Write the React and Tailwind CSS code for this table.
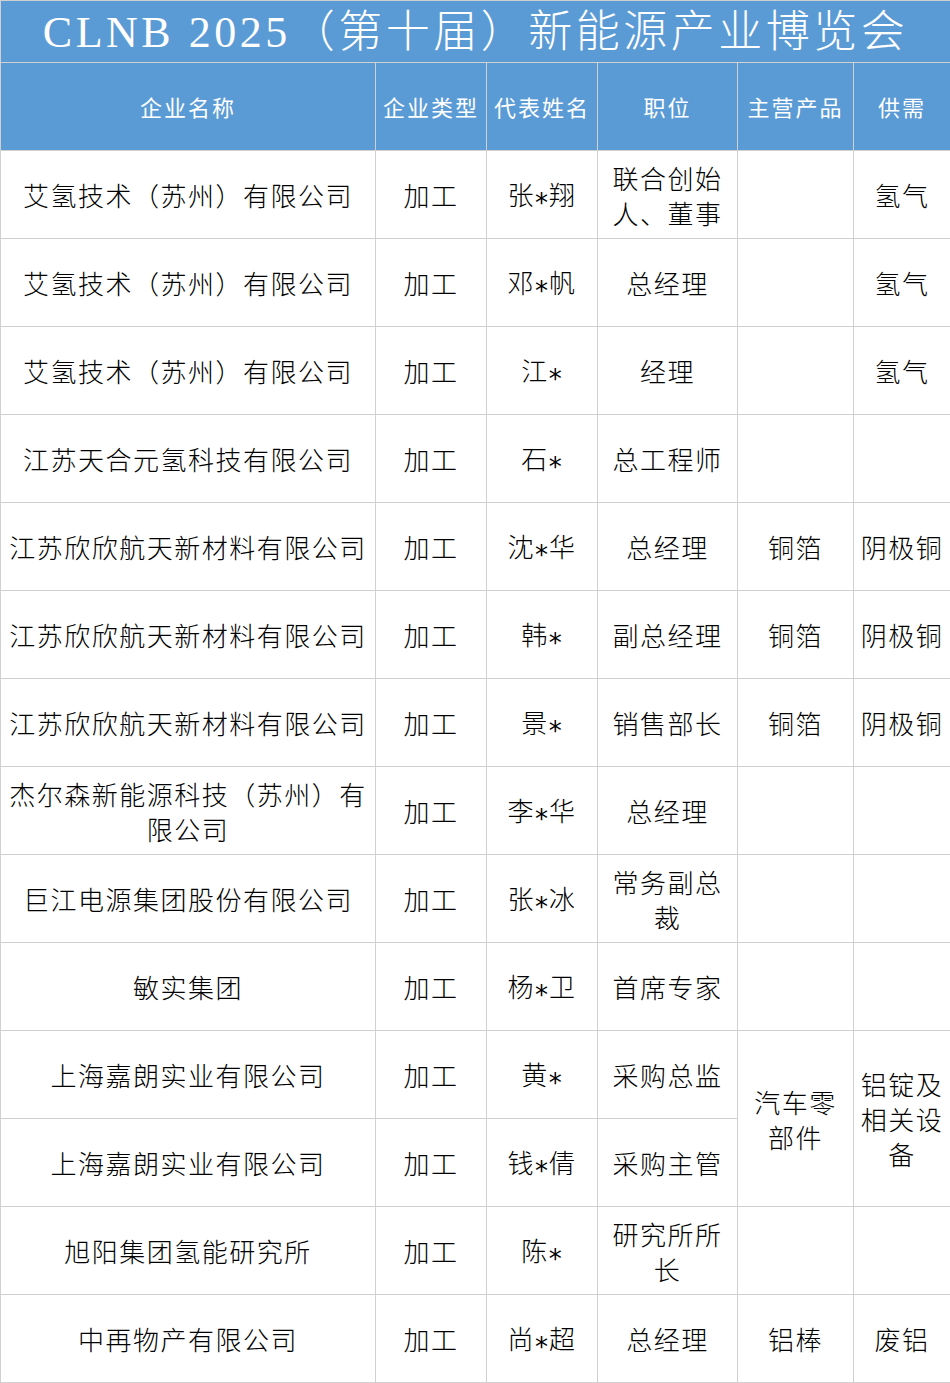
import React from 'react';

const rows = [
  ['艾氢技术（苏州）有限公司', '加工', '张*翔', '联合创始\n人、董事', '', '氢气'],
  ['艾氢技术（苏州）有限公司', '加工', '邓*帆', '总经理', '', '氢气'],
  ['艾氢技术（苏州）有限公司', '加工', '江*', '经理', '', '氢气'],
  ['江苏天合元氢科技有限公司', '加工', '石*', '总工程师', '', ''],
  ['江苏欣欣航天新材料有限公司', '加工', '沈*华', '总经理', '铜箔', '阴极铜'],
  ['江苏欣欣航天新材料有限公司', '加工', '韩*', '副总经理', '铜箔', '阴极铜'],
  ['江苏欣欣航天新材料有限公司', '加工', '景*', '销售部长', '铜箔', '阴极铜'],
  ['杰尔森新能源科技（苏州）有\n限公司', '加工', '李*华', '总经理', '', ''],
  ['巨江电源集团股份有限公司', '加工', '张*冰', '常务副总\n裁', '', ''],
  ['敏实集团', '加工', '杨*卫', '首席专家', '', ''],
  ['上海嘉朗实业有限公司', '加工', '黄*', '采购总监', '汽车零\n部件', '铝锭及\n相关设\n备'],
  ['上海嘉朗实业有限公司', '加工', '钱*倩', '采购主管', null, null],
  ['旭阳集团氢能研究所', '加工', '陈*', '研究所所\n长', '', ''],
  ['中再物产有限公司', '加工', '尚*超', '总经理', '铝棒', '废铝'],
];

const headers = ['企业名称', '企业类型', '代表姓名', '职位', '主营产品', '供需'];
const widths = ['w-[375px]', 'w-[111px]', 'w-[111px]', 'w-[140px]', 'w-[116px]', 'w-[97px]'];

// the masked names use a mid-height asterisk, as in the source sheet
const Cell = ({ text }) =>
  text.split('*').map((part, i) => (
    <React.Fragment key={i}>
      {i > 0 && (
        <span
          className="relative top-[7px] text-[26px] font-normal tracking-[1px]"
          style={{ fontFamily: '"DejaVu Sans", sans-serif' }}
        >
          *
        </span>
      )}
      {part}
    </React.Fragment>
  ));

export default function App() {
  return (
    <div className="w-[950px] bg-white" style={{ fontFamily: '"Noto Sans CJK SC", sans-serif' }}>
      <table className="w-[950px] table-fixed border-collapse">
        <colgroup>
          {widths.map((w, i) => (
            <col key={i} className={w} />
          ))}
        </colgroup>
        <tbody>
          <tr className="h-[62px]">
            <td
              colSpan={6}
              className="border border-[#d0d0d0] bg-[#5b9bd5] p-0 pt-[3px] text-center text-[44px] leading-none font-light tracking-[3.5px] text-white"
              style={{ fontFamily: '"Liberation Serif", "Noto Sans CJK SC", serif' }}
            >
              CLNB 2025（第十届）新能源产业博览会
            </td>
          </tr>
          <tr className="h-[88px]">
            {headers.map((h) => (
              <td
                key={h}
                className="border border-[#d0d0d0] bg-[#5b9bd5] px-0 text-center align-middle text-[22px] tracking-[2px] text-white"
              >
                {h}
              </td>
            ))}
          </tr>
          {rows.map((r, ri) => (
            <tr key={ri} className="h-[88px]">
              {r.map((c, ci) =>
                c === null ? null : (
                  <td
                    key={ci}
                    rowSpan={ri === 10 && ci >= 4 ? 2 : 1}
                    className="whitespace-pre-line border border-[#d0d0d0] px-0 text-center align-middle text-[26px] font-light leading-[35px] tracking-[1.5px] text-black"
                  >
                    <Cell text={c} />
                  </td>
                )
              )}
            </tr>
          ))}
        </tbody>
      </table>
    </div>
  );
}
